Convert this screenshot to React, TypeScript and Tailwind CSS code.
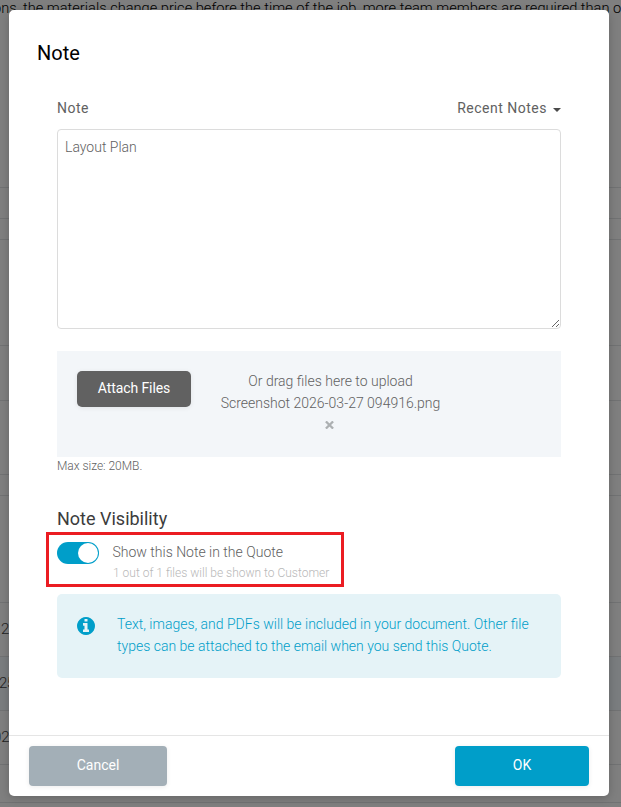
import { useState } from 'react';

const rows = [
  { label: '', className: 'h-[188px]' },
  { label: '', className: 'h-[31px]' },
  { label: '', className: 'h-[21px]' },
  { label: '', className: 'h-[106px]' },
  { label: '', className: 'h-[55px]' },
  { label: '', className: 'h-[74px]' },
  { label: '', className: 'h-[21px]' },
  { label: '', className: 'h-[107px]' },
  { label: '2', className: 'h-[54px] pl-px' },
  { label: '25', className: 'h-[54px] bg-[#7a7d7f] -indent-px tracking-[-0.5px]' },
  { label: '02', className: 'h-[54px] -indent-[7px]' },
  { label: '', className: 'h-[38px]' },
];

function PageBehind() {
  return (
    <div className="h-full w-full overflow-hidden bg-[#7f7f7f] text-[15px] font-light text-[#1e1e1e]">
      {rows.map((row, index) => (
        <div
          key={index}
          className={`flex items-center whitespace-nowrap border-b border-[#717273] ${row.className}`}
        >
          {index === 0 ? (
            <p className="-ml-[7px] self-start text-[14.62px] leading-[17px] text-black">
              ons, the materials change price before the time of the job, more team members are required than o
            </p>
          ) : (
            row.label
          )}
        </div>
      ))}
    </div>
  );
}

function InfoIcon() {
  return (
    <svg width="18" height="18" viewBox="0 128 1536 1536" fill="currentColor" className="mt-[4px] shrink-0">
      <path d="M1024 1376v-160q0-14-9-23t-23-9h-96v-512q0-14-9-23t-23-9h-320q-14 0-23 9t-9 23v160q0 14 9 23t23 9h96v320h-96q-14 0-23 9t-9 23v160q0 14 9 23t23 9h448q14 0 23-9t9-23zm-128-896v-160q0-14-9-23t-23-9h-192q-14 0-23 9t-9 23v160q0 14 9 23t23 9h192q14 0 23-9t9-23zm640 416q0 209-103 385.5t-279.5 279.5-385.5 103-385.5-103-279.5-279.5-103-385.5 103-385.5 279.5-279.5 385.5-103 385.5 103 279.5 279.5 103 385.5z" />
    </svg>
  );
}

export default function App() {
  const [note, setNote] = useState('Layout Plan');
  const [visible, setVisible] = useState(true);

  return (
    <div className="relative h-[807px] w-[621px] overflow-hidden font-[Roboto,sans-serif]">
      <PageBehind />

      <div className="absolute inset-0 pt-[10px] pl-[9px]">
        <div className="flex h-[786px] w-[600px] flex-col rounded-[5px] bg-white shadow-[0_2px_10px_rgba(0,0,0,0.2)]">
          <h2 className="px-7 pt-[28px] text-[20px] leading-[30px] font-normal text-black">Note</h2>

          <div className="flex-1 px-12 pt-[30px] text-[14px] font-light text-[#616161]">
            <div className="flex h-5 items-center justify-between font-normal tracking-[0.5px] text-[#616161]">
              <label htmlFor="note">Note</label>
              <button className="flex items-center gap-[6px]">
                Recent Notes
                <svg width="8" height="4" viewBox="0 0 8 4" fill="#4a4a4a" className="mt-[3px]">
                  <path d="M0 0h8L4 4z" />
                </svg>
              </button>
            </div>

            <textarea
              id="note"
              value={note}
              onChange={(e) => setNote(e.target.value)}
              className="mt-[11px] block h-[200px] w-full resize rounded-[4px] border border-[#dcdcdc] px-[7px] py-[7px] leading-[20px] outline-none"
            />

            <div className="mt-[22px] flex h-[106px] bg-[#f3f6f9] pt-5 pl-5">
              <button className="h-9 w-[114px] rounded-[5px] bg-[#616161] pb-[2px] text-[14px] font-normal tracking-[-0.1px] text-white shadow-[0_1px_5px_rgba(0,0,0,0.08)]">
                Attach Files
              </button>
              <div className="ml-[29.5px] flex w-[220px] flex-col items-center leading-[22px] whitespace-nowrap -mt-[1px]">
                <span>Or drag files here to upload</span>
                <span>Screenshot 2026-03-27 094916.png</span>
                <button className="mt-[7px] mr-[3px]" aria-label="Remove file">
                  <svg width="9" height="8" viewBox="0 0 9 8" stroke="#acb0b2" strokeWidth="2.2">
                    <path d="M.9.4l7.2 7.2M8.1.4L.9 7.6" />
                  </svg>
                </button>
              </div>
            </div>
            <p className="text-[12px] leading-[18px] tracking-[-0.03px]">Max size: 20MB.</p>

            <h3 className="mt-[31px] text-[18px] leading-[26px] font-normal text-[#3c3c3c]">Note Visibility</h3>

            <div className="-ml-[11px] flex h-[55px] w-[298px] border-[3px] border-[#eb1c22] pt-[7px] pl-2">
              <button
                role="switch"
                aria-checked={visible}
                aria-label="Show this Note in the Quote"
                onClick={() => setVisible(!visible)}
                className={`flex h-[22px] w-[42px] shrink-0 items-center rounded-full p-[1px] ${
                  visible ? 'justify-end bg-[#009ec9]' : 'justify-start bg-[#a3afb7]'
                }`}
              >
                <span className="size-5 rounded-full bg-white" />
              </button>
              <div className="ml-[14px] whitespace-nowrap">
                <p className="-ml-[0.5px] leading-[20px]">Show this Note in the Quote</p>
                <p className="text-[12px] leading-[22px] text-[#b8b8b8]">1 out of 1 files will be shown to Customer</p>
              </div>
            </div>

            <div className="mt-[7px] flex h-[84px] rounded-[5px] bg-[#e5f3f7] pt-[19px] pl-5 text-[#009ec9]">
              <InfoIcon />
              <p className="ml-[22px] leading-[22px] whitespace-nowrap">
                Text, images, and PDFs will be included in your document. Other file
                <br />
                types can be attached to the email when you send this Quote.
              </p>
            </div>
          </div>

          <div className="flex h-[61px] justify-between border-t border-[#e5e5e5] px-5 pt-[10px] text-[14px]">
            <button className="h-10 w-[138px] rounded-[4px] bg-[#a3afb7] pb-[2px] text-white shadow-[0_1px_5px_rgba(0,0,0,0.08)]">
              Cancel
            </button>
            <button className="h-10 w-[134px] rounded-[4px] bg-[#009ec9] pb-[2px] text-white shadow-[0_1px_5px_rgba(0,0,0,0.08)]">
              OK
            </button>
          </div>
        </div>
      </div>
    </div>
  );
}
